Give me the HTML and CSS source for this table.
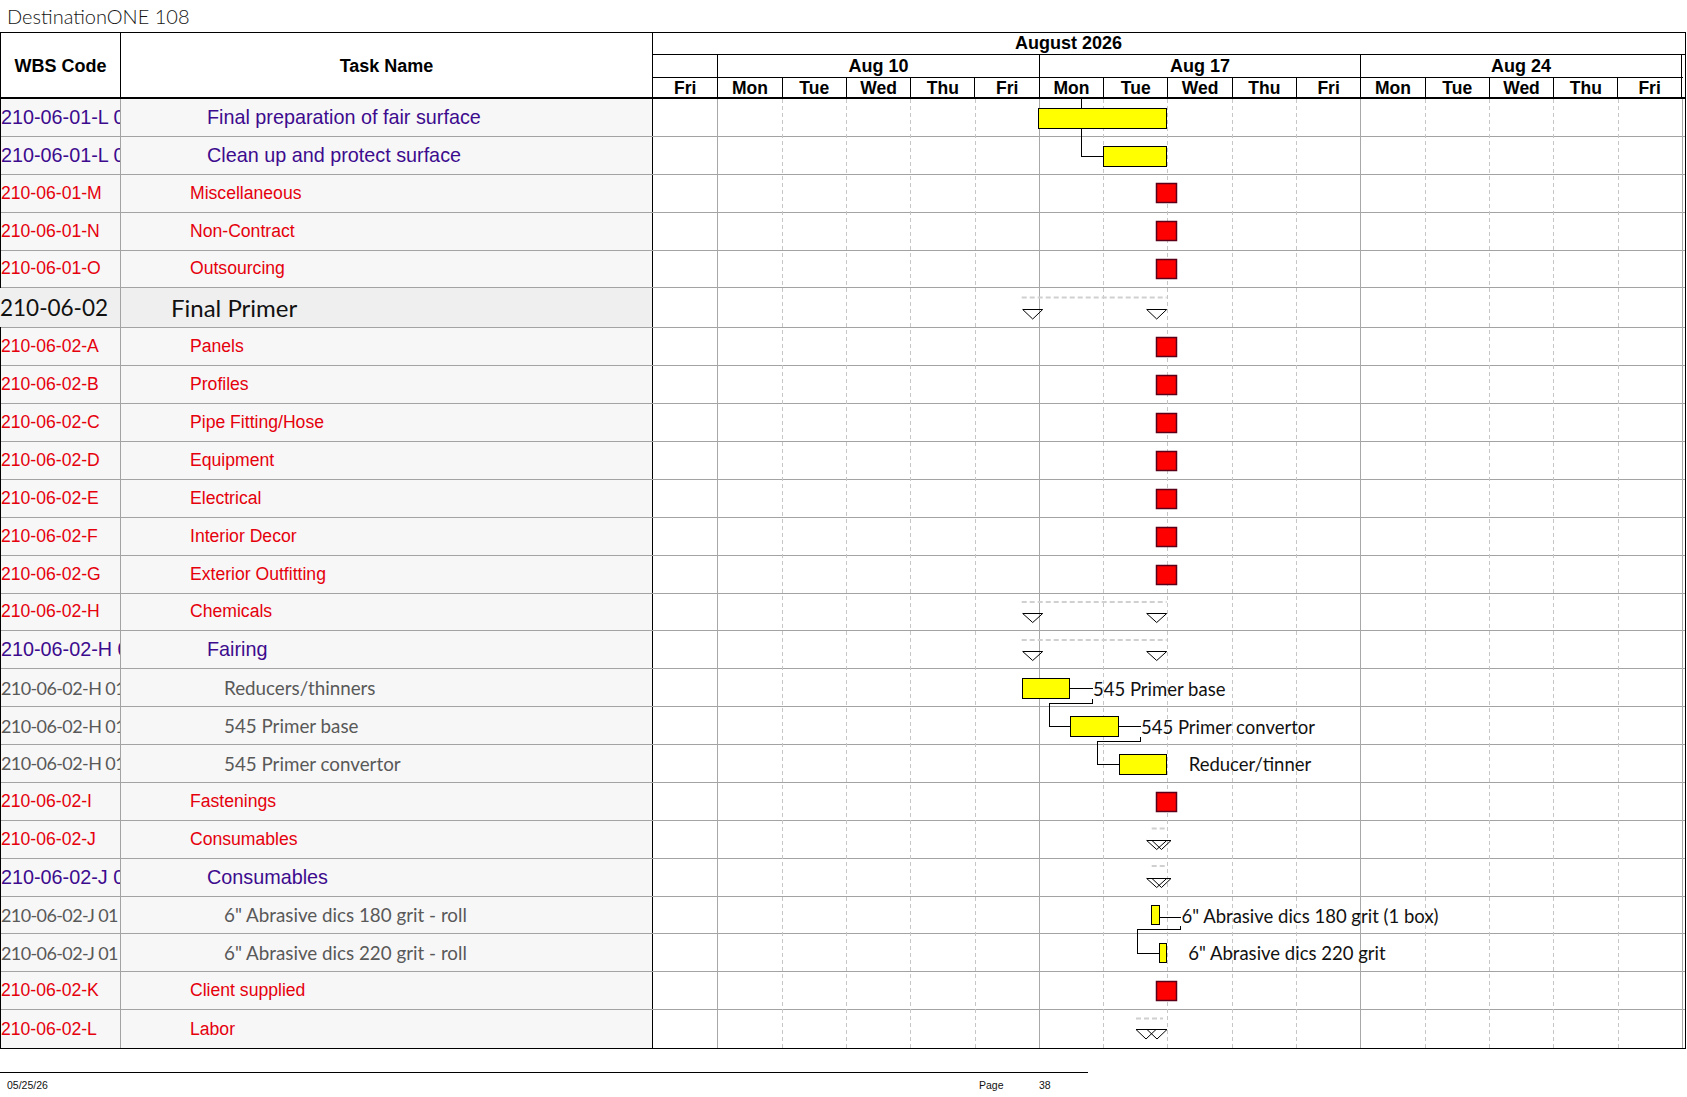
FILE: index.html
```html
<!DOCTYPE html>
<html lang="en">
<head>
<meta charset="utf-8">
<title>DestinationONE 108</title>
<link rel="stylesheet" href="styles.css">
</head>
<body>
<div class="title">DestinationONE 108</div>
<div class="sheet">
  <div class="head">
    <div class="h-wbs">WBS Code</div>
    <div class="h-task">Task Name</div>
    <div class="h-chart">
      <div class="h-month">August 2026</div>
      <div class="h-weeks">
        <div class="wk first"></div>
        <div class="wk">Aug 10</div>
        <div class="wk">Aug 17</div>
        <div class="wk last">Aug 24</div>
      </div>
      <div class="h-days">
        <div class="d first">Fri</div>
        <div class="d">Mon</div><div class="d">Tue</div><div class="d">Wed</div><div class="d">Thu</div><div class="d">Fri</div>
        <div class="d">Mon</div><div class="d">Tue</div><div class="d">Wed</div><div class="d">Thu</div><div class="d">Fri</div>
        <div class="d">Mon</div><div class="d">Tue</div><div class="d">Wed</div><div class="d">Thu</div><div class="d last">Fri</div>
      </div>
    </div>
  </div>
  <div class="body">
    <div class="row purple"><div class="wbs">210-06-01-L 01</div><div class="task">Final preparation of fair surface</div><div class="chart"></div></div>
    <div class="row purple"><div class="wbs">210-06-01-L 01</div><div class="task">Clean up and protect surface</div><div class="chart"></div></div>
    <div class="row red"><div class="wbs">210-06-01-M</div><div class="task">Miscellaneous</div><div class="chart"></div></div>
    <div class="row red"><div class="wbs">210-06-01-N</div><div class="task">Non-Contract</div><div class="chart"></div></div>
    <div class="row red"><div class="wbs">210-06-01-O</div><div class="task">Outsourcing</div><div class="chart"></div></div>
    <div class="row black"><div class="wbs">210-06-02</div><div class="task">Final Primer</div><div class="chart"></div></div>
    <div class="row red"><div class="wbs">210-06-02-A</div><div class="task">Panels</div><div class="chart"></div></div>
    <div class="row red"><div class="wbs">210-06-02-B</div><div class="task">Profiles</div><div class="chart"></div></div>
    <div class="row red"><div class="wbs">210-06-02-C</div><div class="task">Pipe Fitting/Hose</div><div class="chart"></div></div>
    <div class="row red"><div class="wbs">210-06-02-D</div><div class="task">Equipment</div><div class="chart"></div></div>
    <div class="row red"><div class="wbs">210-06-02-E</div><div class="task">Electrical</div><div class="chart"></div></div>
    <div class="row red"><div class="wbs">210-06-02-F</div><div class="task">Interior Decor</div><div class="chart"></div></div>
    <div class="row red"><div class="wbs">210-06-02-G</div><div class="task">Exterior Outfitting</div><div class="chart"></div></div>
    <div class="row red"><div class="wbs">210-06-02-H</div><div class="task">Chemicals</div><div class="chart"></div></div>
    <div class="row purple"><div class="wbs">210-06-02-H 01</div><div class="task">Fairing</div><div class="chart"></div></div>
    <div class="row gray"><div class="wbs">210-06-02-H 01</div><div class="task">Reducers/thinners</div><div class="chart"></div></div>
    <div class="row gray"><div class="wbs">210-06-02-H 01</div><div class="task">545 Primer base</div><div class="chart"></div></div>
    <div class="row gray"><div class="wbs">210-06-02-H 01</div><div class="task">545 Primer convertor</div><div class="chart"></div></div>
    <div class="row red"><div class="wbs">210-06-02-I</div><div class="task">Fastenings</div><div class="chart"></div></div>
    <div class="row red"><div class="wbs">210-06-02-J</div><div class="task">Consumables</div><div class="chart"></div></div>
    <div class="row purple"><div class="wbs">210-06-02-J 01</div><div class="task">Consumables</div><div class="chart"></div></div>
    <div class="row gray"><div class="wbs">210-06-02-J 01</div><div class="task">6" Abrasive dics 180 grit - roll</div><div class="chart"></div></div>
    <div class="row gray"><div class="wbs">210-06-02-J 01</div><div class="task">6" Abrasive dics 220 grit - roll</div><div class="chart"></div></div>
    <div class="row red"><div class="wbs">210-06-02-K</div><div class="task">Client supplied</div><div class="chart"></div></div>
    <div class="row red last"><div class="wbs">210-06-02-L</div><div class="task">Labor</div><div class="chart"></div></div>

    <svg class="overlay" width="1032" height="949" viewBox="0 0 1032 949">
      <g class="grid-week">
        <line x1="64.5" y1="0" x2="64.5" y2="949"/>
        <line x1="386.5" y1="0" x2="386.5" y2="949"/>
        <line x1="707.5" y1="0" x2="707.5" y2="949"/>
        <line x1="1029.5" y1="0" x2="1029.5" y2="949"/>
      </g>
      <g class="grid-day">
        <line x1="129.5" y1="0" x2="129.5" y2="949"/>
        <line x1="193.5" y1="0" x2="193.5" y2="949"/>
        <line x1="257.5" y1="0" x2="257.5" y2="949"/>
        <line x1="322.5" y1="0" x2="322.5" y2="949"/>
        <line x1="450.5" y1="0" x2="450.5" y2="949"/>
        <line x1="514.5" y1="0" x2="514.5" y2="949"/>
        <line x1="579.5" y1="0" x2="579.5" y2="949"/>
        <line x1="643.5" y1="0" x2="643.5" y2="949"/>
        <line x1="772.5" y1="0" x2="772.5" y2="949"/>
        <line x1="836.5" y1="0" x2="836.5" y2="949"/>
        <line x1="900.5" y1="0" x2="900.5" y2="949"/>
        <line x1="965.5" y1="0" x2="965.5" y2="949"/>
      </g>

      <g class="summary">
        <line x1="368.7" y1="198.5" x2="513.7" y2="198.5"/>
        <line x1="368.7" y1="503" x2="513.7" y2="503"/>
        <line x1="368.7" y1="541" x2="513.7" y2="541"/>
        <line x1="498.7" y1="729.5" x2="513.7" y2="729.5"/>
        <line x1="498.7" y1="767" x2="513.7" y2="767"/>
        <line x1="483" y1="919.5" x2="510" y2="919.5"/>
      </g>

      <g class="links">
        <polyline points="428.5,0 428.5,9.5"/>
        <polyline points="428.5,29.5 428.5,57.5 450.5,57.5"/>
        <polyline points="416.5,589.5 439.5,589.5"/>
        <polyline points="439.5,599.5 439.5,604.5 396.5,604.5 396.5,627.5 417.5,627.5"/>
        <polyline points="465.5,627.5 487.5,627.5"/>
        <polyline points="487.5,637.5 487.5,642.5 444.5,642.5 444.5,665.5 466.5,665.5"/>
        <polyline points="506,818.5 527.5,818.5"/>
        <polyline points="527.5,826.5 527.5,830.5 484.5,830.5 484.5,854.5 506.5,854.5"/>
      </g>

      <g class="bars">
        <rect x="385.5" y="9.5" width="128" height="20"/>
        <rect x="450.5" y="47.5" width="63" height="20"/>
        <rect x="369.5" y="579.5" width="47" height="20"/>
        <rect x="417.5" y="617.5" width="48" height="20"/>
        <rect x="466.5" y="655.5" width="47" height="20"/>
        <rect x="498.5" y="806.5" width="7.5" height="19"/>
        <rect x="506.5" y="844.5" width="7" height="19"/>
      </g>

      <g class="crit">
        <rect x="503.5" y="84.5" width="20" height="19"/>
        <rect x="503.5" y="122.5" width="20" height="19"/>
        <rect x="503.5" y="160.5" width="20" height="19"/>
        <rect x="503.5" y="238.5" width="20" height="19"/>
        <rect x="503.5" y="276.5" width="20" height="19"/>
        <rect x="503.5" y="314.5" width="20" height="19"/>
        <rect x="503.5" y="352.5" width="20" height="19"/>
        <rect x="503.5" y="390.5" width="20" height="19"/>
        <rect x="503.5" y="428.5" width="20" height="19"/>
        <rect x="503.5" y="466.5" width="20" height="19"/>
        <rect x="503.5" y="693.5" width="20" height="19"/>
        <rect x="503.5" y="882.5" width="20" height="19"/>
      </g>

      <g class="ms">
        <polygon points="369.7,210.5 389.7,210.5 379.7,220"/>
        <polygon points="493.7,210.5 513.7,210.5 503.7,220"/>
        <polygon points="369.7,514.5 389.7,514.5 379.7,523.5"/>
        <polygon points="493.7,514.5 513.7,514.5 503.7,523.5"/>
        <polygon points="369.7,552.5 389.7,552.5 379.7,561.5"/>
        <polygon points="493.7,552.5 513.7,552.5 503.7,561.5"/>
        <polygon points="493.7,741.5 513.7,741.5 503.7,750.5"/>
        <polygon points="499,741.5 518,741.5 508.5,750.5"/>
        <polygon points="493.7,779.5 513.7,779.5 503.7,788.5"/>
        <polygon points="499,779.5 518,779.5 508.5,788.5"/>
        <polygon points="483,930.5 503,930.5 493,940"/>
        <polygon points="494,930.5 514,930.5 504,940"/>
      </g>

      <g class="lbl">
        <text x="440" y="596.7">545 Primer base</text>
        <text x="488" y="634.7">545 Primer convertor</text>
        <text x="535.7" y="672">Reducer/tinner</text>
        <text x="528.5" y="823.7">6" Abrasive dics 180 grit (1 box)</text>
        <text x="535.3" y="861.3">6" Abrasive dics 220 grit</text>
      </g>
    </svg>
  </div>
</div>
<div class="footer">
  <div class="f-date">05/25/26</div>
  <div class="f-page">Page</div>
  <div class="f-num">38</div>
</div>
</body>
</html>
```

FILE: styles.css
```css
* { box-sizing: border-box; }

body {
  margin: 0;
  background: #ffffff;
  font-family: "Liberation Sans", Arial, sans-serif;
  color: #000;
}

.title {
  height: 32px;
  padding: 4px 0 4px 7px;
  font-family: Lato, "Liberation Sans", sans-serif;
  font-weight: 300;
  font-size: 20px;
  line-height: 24px;
  color: #141414;
}

.sheet {
  width: 1686px;
  border: 1px solid #000;
}

/* header */
.head {
  display: grid;
  grid-template-columns: 120px 532px 1fr;
  height: 66px;
  border-bottom: 2px solid #000;
  font-weight: bold;
  font-size: 18px;
}

.h-wbs, .h-task {
  display: flex;
  align-items: center;
  justify-content: center;
  border-right: 1px solid #000;
}

.h-chart {
  display: flex;
  flex-direction: column;
}

.h-month {
  height: 22px;
  border-bottom: 1px solid #000;
  padding-left: 362px;
  line-height: 21px;
}

.h-weeks {
  height: 23px;
  display: grid;
  grid-template-columns: 64.3px 321.5px 321.5px 321.5px;
  width: 1029.8px;
  border-bottom: 1px solid #000;
}

.wk {
  border-left: 1px solid #000;
  text-align: center;
  line-height: 22px;
}
.wk.first { border-left: none; }
.wk.last { border-right: 1px solid #000; }

.h-days {
  flex: 1;
  display: grid;
  grid-template-columns: repeat(16, 64.3px);
  width: 1029.8px;
}

.d {
  border-left: 1px solid #000;
  display: flex;
  align-items: center;
  justify-content: center;
  font-size: 17.5px;
}
.d.first { border-left: none; }
.d.last { border-right: 1px solid #000; }

/* body */
.body {
  position: relative;
}

.row {
  display: grid;
  grid-template-columns: 120px 532px 1fr;
  height: 37.875px;
  border-bottom: 1px solid #a3a3a3;
}
.row.last { border-bottom: none; }

.wbs, .task {
  display: flex;
  align-items: center;
  white-space: nowrap;
  overflow: hidden;
  background: #f7f7f7;
}

.wbs {
  border-right: 1px solid #a3a3a3;
  padding-left: 0;
}

.task {
  border-right: 1px solid #000;
}

.chart { background: #fff; }

.red { color: #e5000c; font-size: 17.6px; }
.red .task { padding-left: 69px; }

.purple { color: #3d0b8e; font-size: 19.8px; }
.purple .task { padding-left: 86px; }

.gray { color: #595959; font-family: Lato, "Liberation Sans", sans-serif; font-size: 18.8px; }
.gray .wbs { font-size: 18px; letter-spacing: -0.6px; }
.gray .task { padding-left: 103px; }

.black { height: 40px; color: #111; font-family: Lato, "Liberation Sans", sans-serif; }
.black .wbs, .black .task { background: #efefef; }
.black .wbs { font-size: 22.5px; padding-left: 0; margin-left: -1px; }
.black .task { font-size: 24px; padding-left: 50px; }

/* chart overlay */
.overlay {
  position: absolute;
  left: 652px;
  top: 0;
}

.grid-week line { stroke: #a8a8a8; stroke-width: 1; shape-rendering: crispEdges; }
.grid-day line { stroke: #c6c6c6; stroke-width: 1; stroke-dasharray: 4 3; shape-rendering: crispEdges; }

.summary line { stroke: #d0d0d0; stroke-width: 2; stroke-dasharray: 5 3; }

.links polyline { fill: none; stroke: #000; stroke-width: 1; shape-rendering: crispEdges; }

.bars rect { fill: #ffff00; stroke: #000; stroke-width: 1; shape-rendering: crispEdges; }

.crit rect { fill: #ff0000; stroke: #5a0018; stroke-width: 1.5; }

.ms polygon { fill: none; stroke: #000; stroke-width: 1; }

.lbl text {
  font-family: Lato, "Liberation Sans", sans-serif;
  font-size: 18.5px;
  fill: #111;
}

/* footer */
.footer {
  margin-top: 23px;
  width: 1088px;
  border-top: 1px solid #000;
  display: flex;
  padding-top: 6px;
  font-size: 10.5px;
  line-height: 12px;
  color: #111;
}
.f-date { width: 979px; padding-left: 7px; }
.f-page { width: 60px; }
```
